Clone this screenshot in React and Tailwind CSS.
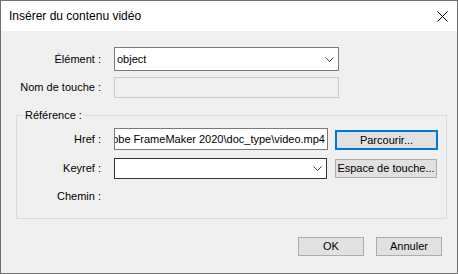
import React from "react";

function Chevron() {
  return (
    <svg width="9" height="5" viewBox="0 0 9 5" className="shrink-0">
      <polyline points="0.5,0.5 4.5,4.5 8.5,0.5" fill="none" stroke="#404040" strokeWidth="1" />
    </svg>
  );
}

export default function App() {
  return (
    <div className="w-[458px] h-[274px] border border-[#707070] flex flex-col font-['Liberation_Sans',Arial,sans-serif] text-[11px] text-black leading-[13px] overflow-hidden">
      <div className="h-[30px] bg-white flex items-center justify-between pl-[8px] pr-[9px] shrink-0 text-[12px]">
        <span>Insérer du contenu vidéo</span>
        <svg width="11" height="11" viewBox="0 0 11 11">
          <line x1="0.5" y1="0.5" x2="10.5" y2="10.5" stroke="#000" strokeWidth="1" />
          <line x1="10.5" y1="0.5" x2="0.5" y2="10.5" stroke="#000" strokeWidth="1" />
        </svg>
      </div>
      <div className="flex-1 bg-[#f0f0f0] flex flex-col pt-[16px]">
        <div className="flex items-center h-[24px]">
          <div className="w-[100px] text-right whitespace-nowrap">Élément :</div>
          <div className="ml-[13px] w-[225px] h-[24px] bg-white border border-[#7a7a7a] flex items-center justify-between pl-[2px] pr-[4px]">
            <span>object</span>
            <Chevron />
          </div>
        </div>
        <div className="flex items-center h-[21px] mt-[6px]">
          <div className="w-[100px] text-right whitespace-nowrap">Nom de touche :</div>
          <div className="ml-[13px] w-[225px] h-[21px] bg-[#f0f0f0] border border-[#cccccc]" />
        </div>
        <div className="relative mt-[17px] ml-[15px] w-[431px] h-[104px] border border-[#dcdcdc] flex flex-col pt-[12px]">
          <span className="absolute left-[6px] top-[-7px] px-[2px] bg-[#f0f0f0] whitespace-nowrap">Référence :</span>
          <div className="flex items-start h-[22px]">
            <div className="w-[84px] text-right self-center whitespace-nowrap">Href :</div>
            <div className="ml-[13px] w-[214px] h-[22px] bg-white border border-[#7a7a7a] flex items-center justify-end overflow-hidden pr-[2px] whitespace-nowrap">
              <span>C:\Program Files\Adobe FrameMaker 2020\doc_type\video.mp4</span>
            </div>
            <div className="ml-[7px] mt-[2px] w-[103px] h-[20px] bg-[#e1e1e1] border-2 border-[#0078d7] flex items-center justify-center whitespace-nowrap">
              Parcourir...
            </div>
          </div>
          <div className="flex items-start h-[21px] mt-[8px]">
            <div className="w-[84px] text-right self-center whitespace-nowrap">Keyref :</div>
            <div className="ml-[13px] w-[213px] h-[21px] bg-white border border-[#333333] flex items-center justify-end pr-[4px]">
              <Chevron />
            </div>
            <div className="ml-[8px] mt-[1px] w-[102px] h-[19px] bg-[#e1e1e1] border border-[#adadad] flex items-center justify-center whitespace-nowrap">
              Espace de touche...
            </div>
          </div>
          <div className="flex items-center h-[14px] mt-[10px]">
            <div className="w-[84px] text-right whitespace-nowrap">Chemin :</div>
          </div>
        </div>
        <div className="flex justify-end gap-[12px] pr-[15px] mt-[18px]">
          <div className="w-[66px] h-[19px] bg-[#e1e1e1] border border-[#adadad] flex items-center justify-center">OK</div>
          <div className="w-[66px] h-[19px] bg-[#e1e1e1] border border-[#adadad] flex items-center justify-center">Annuler</div>
        </div>
      </div>
    </div>
  );
}
